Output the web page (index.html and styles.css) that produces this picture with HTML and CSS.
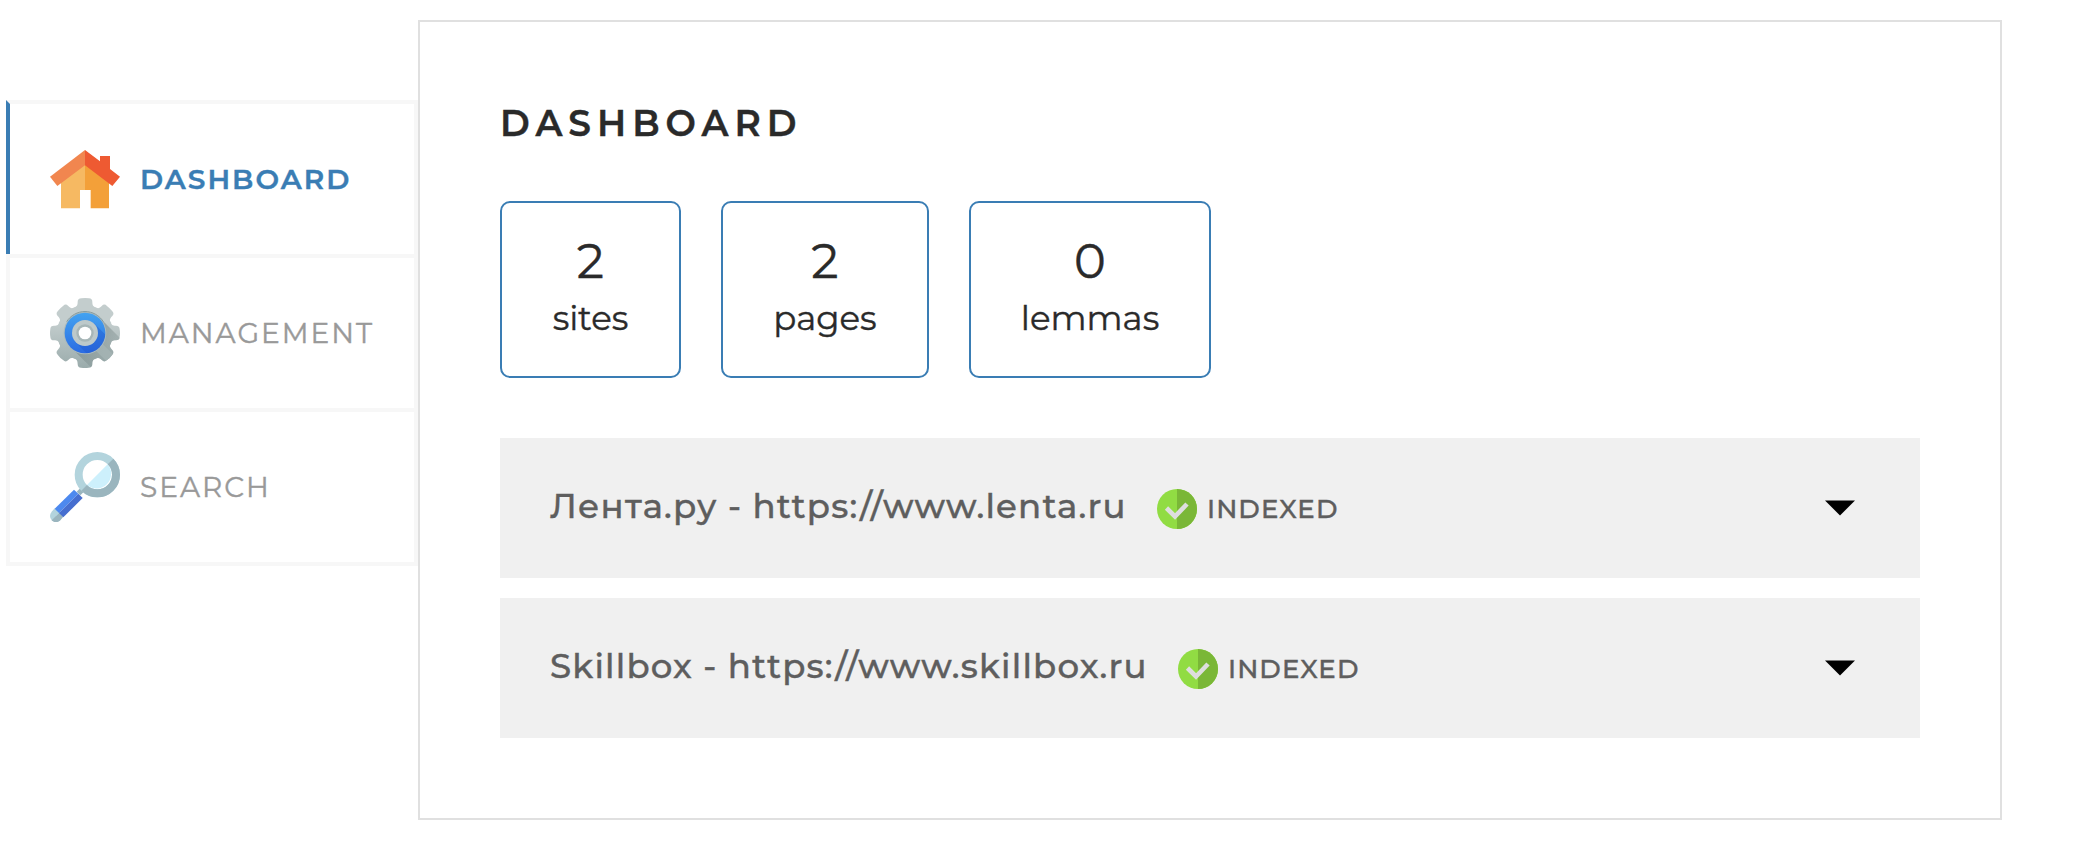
FILE: index.html
```html
<!DOCTYPE html>
<html lang="en">
<head>
<meta charset="utf-8">
<title>Dashboard</title>
<link rel="stylesheet" href="styles.css">
</head>
<body>
<div class="page">
  <nav class="menu">
    <a class="menu-item menu-item_active">
      <svg class="menu-icon" viewBox="0 0 210 210">
        <path fill="#f6b962" d="M33 100 105 50V138H90V193H33Z"/>
        <path fill="#f3a039" d="M105 50 177 100V193H122V138H105Z"/>
        <path fill="#f1864f" d="M105 18 0 98 22 126 105 64Z"/>
        <path fill="#ee5a32" d="M105 18 150 52V36H180V75L210 98 187 126 105 64Z"/>
      </svg>
      <span class="menu-text">DASHBOARD</span>
    </a>
    <a class="menu-item">
      <svg class="menu-icon" viewBox="0 0 210 210">
        <defs>
          <linearGradient id="steel" x1="0" y1="0" x2="0" y2="1"><stop offset=".35" stop-color="#c3cdcd"/><stop offset="1" stop-color="#9aabab"/></linearGradient>
          <linearGradient id="blue" x1="0" y1="0" x2="0" y2="1"><stop offset="0" stop-color="#43a3f1"/><stop offset="1" stop-color="#2b6ce2"/></linearGradient>
          <linearGradient id="shade" x1="0" y1="0" x2="1" y2="1"><stop offset=".4" stop-color="#667777" stop-opacity=".65"/><stop offset="1" stop-color="#889999" stop-opacity=".15"/></linearGradient>
          <path id="tooth" d="M68 34C80 27 83 22 83 12Q83 1 94 1Q105-1 117 1Q127 1 127 12C127 22 130 27 142 34Z"/>
          <clipPath id="gear"><circle cx="105" cy="105" r="84"/><use href="#tooth" transform="rotate(90 105 105)"/><use href="#tooth" transform="rotate(135 105 105)"/><use href="#tooth" transform="rotate(180 105 105)"/></clipPath>
          <clipPath id="ring"><circle cx="105" cy="105" r="61"/></clipPath>
          <mask id="wheel"><g fill="#fff"><circle cx="105" cy="105" r="84"/><use href="#tooth"/><use href="#tooth" transform="rotate(45 105 105)"/><use href="#tooth" transform="rotate(90 105 105)"/><use href="#tooth" transform="rotate(135 105 105)"/><use href="#tooth" transform="rotate(180 105 105)"/><use href="#tooth" transform="rotate(225 105 105)"/><use href="#tooth" transform="rotate(270 105 105)"/><use href="#tooth" transform="rotate(315 105 105)"/></g></mask>
        </defs>
        <rect width="210" height="210" fill="url(#steel)" mask="url(#wheel)"/>
        <path d="M150 60 215 125V210H125L62 148Z" fill="url(#shade)" opacity=".7" clip-path="url(#gear)"/>
        <path d="M138 158 158 138 195 175 175 195Z" fill="#a5b4b4" opacity=".8" clip-path="url(#gear)"/>
        <circle cx="105" cy="105" r="64" fill="#a9b9be"/>
        <path d="M50 71A65 65 0 0 1 160 71" fill="none" stroke="#879b9d" stroke-width="3"/>
        <circle cx="105" cy="105" r="61" fill="url(#blue)"/>
        <path d="M132 76 185 129V185H129L76 132Z" fill="#1e55ce" opacity=".4" clip-path="url(#ring)"/>
        <circle cx="105" cy="105" r="39" fill="#bdc9ca"/>
        <circle cx="105" cy="105" r="26" fill="#a7b6b7"/>
        <circle cx="105" cy="105" r="19" fill="#fff"/>
      </svg>
      <span class="menu-text">MANAGEMENT</span>
    </a>
    <a class="menu-item">
      <svg class="menu-icon" viewBox="0 0 210 210">
        <path d="M80 119 93 106 104 117 91 130Z" fill="#9ab5be"/>
        <circle cx="142" cy="68" r="44" fill="#fff"/>
        <path d="M173 37A44 44 0 0 1 111 99Z" fill="#cdf0fc"/>
        <circle cx="142" cy="68" r="56" fill="none" stroke="#b3d4dd" stroke-width="24"/>
        <path d="M181.600 28.400A56 56 0 0 1 102.400 107.600" fill="none" stroke="#9ab5be" stroke-width="24"/>
        <circle cx="18" cy="192" r="18" fill="#b3d4dd"/>
        <path d="M5 205A18 18 0 0 0 31 205L40 194 28 182Z" fill="#9ab5be"/>
        <path d="M14 169 28 182 18 192 5 179Z" fill="#b3d4dd"/>
        <path d="M72 113 85 125 27 183 14 170Z" fill="#4d89ef"/>
        <path d="M85 125 98 138 40 196 27 183Z" fill="#466ecf"/>
      </svg>
      <span class="menu-text">SEARCH</span>
    </a>
  </nav>
  <main class="panel">
    <h1 class="title">DASHBOARD</h1>
    <div class="stats">
      <div class="stat stat_sites"><div class="stat-num">2</div><div class="stat-label">sites</div></div>
      <div class="stat stat_pages"><div class="stat-num">2</div><div class="stat-label">pages</div></div>
      <div class="stat stat_lemmas"><div class="stat-num">0</div><div class="stat-label">lemmas</div></div>
    </div>
    <div class="sites">
      <div class="site">
        <span class="site-name site-name_lenta">Лента.ру - https://www.lenta.ru</span>
        <svg class="check" viewBox="0 0 40 40"><circle cx="20" cy="20" r="20" fill="#91dc43"/><path d="M20 0A20 20 0 0 1 20 40Z" fill="#7ab737"/><path d="M9.500 19 18 27.500 30 15" fill="none" stroke="#dedede" stroke-width="4.600"/></svg>
        <span class="status">INDEXED</span>
        <svg class="arrow" viewBox="0 0 30 16"><path d="M0 .5H30L15 15.500Z"/></svg>
      </div>
      <div class="site">
        <span class="site-name site-name_skillbox">Skillbox - https://www.skillbox.ru</span>
        <svg class="check" viewBox="0 0 40 40"><circle cx="20" cy="20" r="20" fill="#91dc43"/><path d="M20 0A20 20 0 0 1 20 40Z" fill="#7ab737"/><path d="M9.500 19 18 27.500 30 15" fill="none" stroke="#dedede" stroke-width="4.600"/></svg>
        <span class="status">INDEXED</span>
        <svg class="arrow" viewBox="0 0 30 16"><path d="M0 .5H30L15 15.500Z"/></svg>
      </div>
    </div>
  </main>
</div>
</body>
</html>
```
FILE: styles.css
```css
* { box-sizing: border-box; }
body { margin: 0; background: #fff; color: #2a2a2a; font-family: Montserrat, Inter, sans-serif; -webkit-text-stroke: .4px currentColor; }
.page { display: flex; align-items: flex-start; padding: 20px 0 0 6px; height: 852px; }
.menu { width: 412px; margin-top: 80px; flex: none; border-bottom: 4px solid #f7f7f7; }
.menu-item { display: flex; align-items: center; height: 154px; padding: 0 0 0 40px; border: 4px solid #f7f7f7; border-bottom: 0; color: #999; font-size: 28px; letter-spacing: 2px; white-space: nowrap; }
.menu-item_active { border-left-color: #3a7db4; color: #3a7db4; font-weight: 600; }
.menu-icon { width: 70px; height: 70px; margin-right: 20px; flex: none; }
.menu-text { line-height: 34px; }
.panel { width: 1584px; height: 800px; flex: none; border: 2px solid #e0e0e0; padding: 78px 80px 0; }
.title { margin: 0; font-size: 36px; line-height: 46px; font-weight: 600; letter-spacing: 6px; }
.stats { display: flex; gap: 40px; margin-top: 55px; }
.stat { height: 177px; border: 2px solid #3a7db4; border-radius: 10px; text-align: center; padding-top: 29px; }
.stat_sites { width: 181px; }
.stat_pages { width: 208px; }
.stat_lemmas { width: 242px; }
.stat-num { font-size: 48px; line-height: 58px; }
.stat-label { font-size: 34px; line-height: 56px; }
.sites { display: flex; flex-direction: column; gap: 20px; margin-top: 60px; }
.site { display: flex; align-items: center; height: 140px; padding: 0 65px 0 50px; background: #f0f0f0; color: #5e5e5e; font-weight: 500; white-space: nowrap; }
.site-name { font-size: 34px; line-height: 44px; margin-bottom: 4px; letter-spacing: 1.18px; }
.site-name_lenta { width: 607px; }
.site-name_skillbox { width: 628px; }
.check { width: 40px; height: 40px; flex: none; margin-top: 2px; }
.status { font-size: 26px; line-height: 32px; margin: 2px 0 0 10px; letter-spacing: 1.1px; }
.arrow { width: 30px; height: 16px; margin: 0 0 0 auto; }
```
